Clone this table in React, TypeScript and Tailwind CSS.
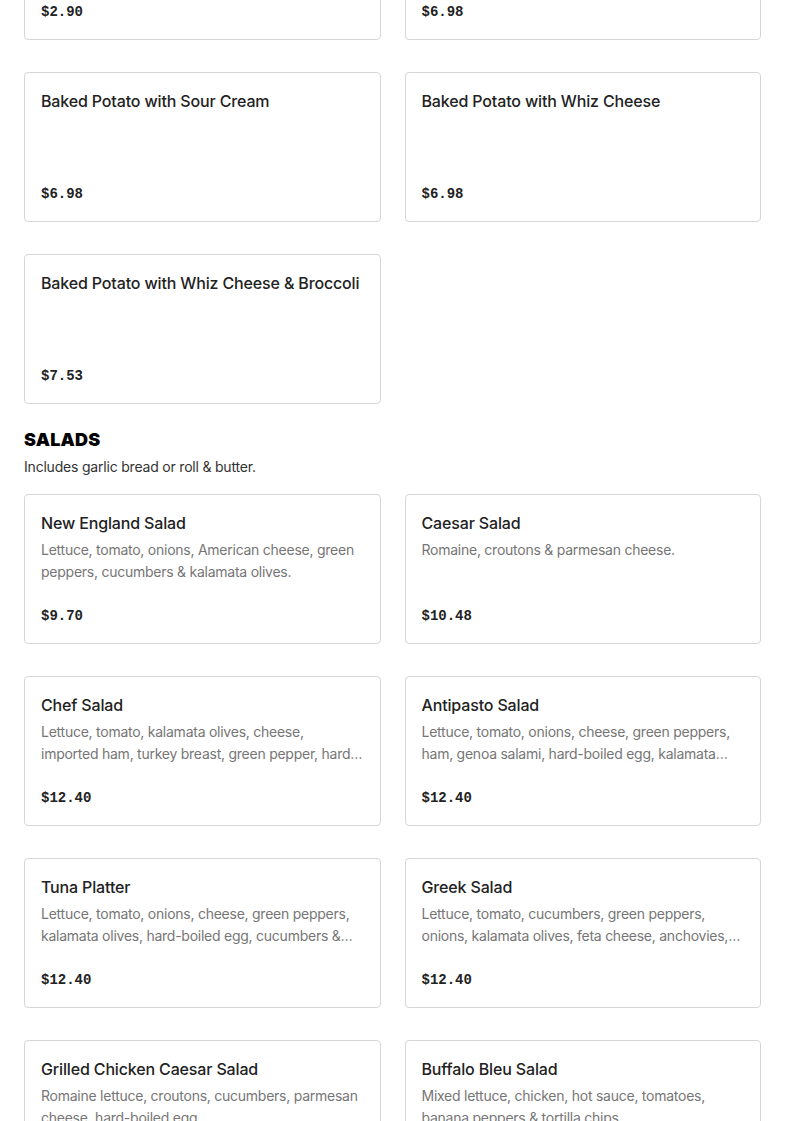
import React from "react";

type Item = { name: string; desc?: string; price: string };

const potatoes: (Item | null)[] = [
  { name: "Baked Potato", price: "$2.90" },
  { name: "Baked Potato with Broccoli", price: "$6.98" },
  { name: "Baked Potato with Sour Cream", price: "$6.98" },
  { name: "Baked Potato with Whiz Cheese", price: "$6.98" },
  { name: "Baked Potato with Whiz Cheese & Broccoli", price: "$7.53" },
];

const salads: Item[] = [
  {
    name: "New England Salad",
    desc: "Lettuce, tomato, onions, American cheese, green peppers, cucumbers & kalamata olives.",
    price: "$9.70",
  },
  { name: "Caesar Salad", desc: "Romaine, croutons & parmesan cheese.", price: "$10.48" },
  {
    name: "Chef Salad",
    desc: "Lettuce, tomato, kalamata olives, cheese, imported ham, turkey breast, green pepper, hard-boiled egg & cucumbers.",
    price: "$12.40",
  },
  {
    name: "Antipasto Salad",
    desc: "Lettuce, tomato, onions, cheese, green peppers, ham, genoa salami, hard-boiled egg, kalamata olives & cucumbers.",
    price: "$12.40",
  },
  {
    name: "Tuna Platter",
    desc: "Lettuce, tomato, onions, cheese, green peppers, kalamata olives, hard-boiled egg, cucumbers & tuna.",
    price: "$12.40",
  },
  {
    name: "Greek Salad",
    desc: "Lettuce, tomato, cucumbers, green peppers, onions, kalamata olives, feta cheese, anchovies, stuffed grape leaves.",
    price: "$12.40",
  },
  {
    name: "Grilled Chicken Caesar Salad",
    desc: "Romaine lettuce, croutons, cucumbers, parmesan cheese, hard-boiled egg.",
    price: "$13.50",
  },
  {
    name: "Buffalo Bleu Salad",
    desc: "Mixed lettuce, chicken, hot sauce, tomatoes, banana peppers & tortilla chips.",
    price: "$13.50",
  },
];

function Card({ item }: { item: Item }) {
  return (
    <div className="h-[150px] flex flex-col rounded-[4px] border border-[#d6d6d6] bg-white px-4 pt-4 pb-[15px]">
      <div className="text-[16px] leading-[24px] font-medium text-[#222222] tracking-[-0.15px]">{item.name}</div>
      {item.desc && (
        <div className="mt-[4px] text-[14px] leading-[22px] text-[#767676] tracking-[-0.25px] line-clamp-2">
          {item.desc}
        </div>
      )}
      <div className="mt-auto font-['Liberation_Mono',monospace] font-bold text-[14px] leading-[24px] text-[#222222]">
        {item.price}
      </div>
    </div>
  );
}

export default function App() {
  return (
    <div className="bg-white min-h-screen overflow-hidden font-['Inter','Liberation_Sans',sans-serif]">
      <div className="px-6 -mt-[110px]">
        <div className="grid grid-cols-2 gap-x-6 gap-y-8">
          {potatoes.map((p, i) => (p ? <Card key={i} item={p} /> : <div key={i} />))}
        </div>
        <div className="mt-[25px] text-[18px] leading-[22px] font-black text-black tracking-[0.2px]">SALADS</div>
        <div className="mt-[6px] text-[14px] leading-[20px] text-[#333333] tracking-[-0.2px]">
          Includes garlic bread or roll &amp; butter.
        </div>
        <div className="mt-[17px] grid grid-cols-2 gap-x-6 gap-y-8 pb-10">
          {salads.map((s, i) => (
            <Card key={i} item={s} />
          ))}
        </div>
      </div>
    </div>
  );
}
